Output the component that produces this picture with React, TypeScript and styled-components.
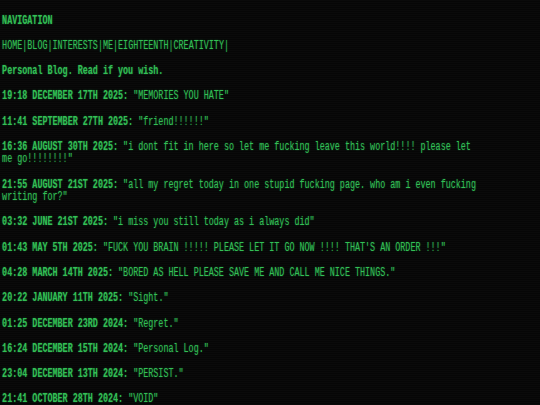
import React from "react";
import styled, { createGlobalStyle } from "styled-components";

const GlobalStyle = createGlobalStyle`
  html, body {
    margin: 0;
    padding: 0;
    background: #080808;
  }
  body {
    min-height: 405px;
    overflow: hidden;
    background:
      repeating-linear-gradient(
        to bottom,
        #0a0a0a 0px,
        #0a0a0a 1px,
        #060606 1px,
        #060606 2px
      );
  }
`;

const Screen = styled.main`
  width: 95ch;
  padding: 14.5px 0 0 3px;
  transform: scaleX(0.7);
  transform-origin: 0 0;
  font-family: "Liberation Mono", "DejaVu Sans Mono", monospace;
  font-size: 12px;
  line-height: 12.4px;
  color: #33bf55;
  text-shadow: 0 0 2px rgba(40, 200, 90, 0.45);
  display: flex;
  flex-direction: column;
  gap: 12.9px;
`;

const Heading = styled.h1`
  margin: 0;
  font: inherit;
  font-weight: 700;
`;

const Nav = styled.nav`
  display: flex;
`;

const NavLink = styled.a`
  color: inherit;
  text-decoration: none;
  &::after {
    content: "|";
  }
`;

const Intro = styled.p`
  margin: 0;
  font-weight: 700;
`;

const Entry = styled.p`
  margin: 0;
`;

const Stamp = styled.span`
  font-weight: 700;
`;

const navItems = ["HOME", "BLOG", "INTERESTS", "ME", "EIGHTEENTH", "CREATIVITY"];

const entries: { stamp: string; title: string }[] = [
  { stamp: "19:18 DECEMBER 17TH 2025", title: "MEMORIES YOU HATE" },
  { stamp: "11:41 SEPTEMBER 27TH 2025", title: "friend!!!!!!" },
  {
    stamp: "16:36 AUGUST 30TH 2025",
    title: "i dont fit in here so let me fucking leave this world!!!! please let me go!!!!!!!!",
  },
  {
    stamp: "21:55 AUGUST 21ST 2025",
    title: "all my regret today in one stupid fucking page. who am i even fucking writing for?",
  },
  { stamp: "03:32 JUNE 21ST 2025", title: "i miss you still today as i always did" },
  {
    stamp: "01:43 MAY 5TH 2025",
    title: "FUCK YOU BRAIN !!!!! PLEASE LET IT GO NOW !!!! THAT'S AN ORDER !!!",
  },
  { stamp: "04:28 MARCH 14TH 2025", title: "BORED AS HELL PLEASE SAVE ME AND CALL ME NICE THINGS." },
  { stamp: "20:22 JANUARY 11TH 2025", title: "Sight." },
  { stamp: "01:25 DECEMBER 23RD 2024", title: "Regret." },
  { stamp: "16:24 DECEMBER 15TH 2024", title: "Personal Log." },
  { stamp: "23:04 DECEMBER 13TH 2024", title: "PERSIST." },
  { stamp: "21:41 OCTOBER 28TH 2024", title: "VOID" },
];

export default function App() {
  return (
    <>
      <GlobalStyle />
      <Screen>
        <Heading>NAVIGATION</Heading>
        <Nav>
          {navItems.map((item) => (
            <NavLink key={item} href="#">
              {item}
            </NavLink>
          ))}
        </Nav>
        <Intro>Personal Blog. Read if you wish.</Intro>
        {entries.map((e) => (
          <Entry key={e.stamp}>
            <Stamp>{e.stamp}:</Stamp> "{e.title}"
          </Entry>
        ))}
      </Screen>
    </>
  );
}
